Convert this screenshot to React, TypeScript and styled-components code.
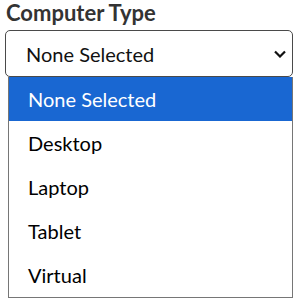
import * as React from "react";
import styled, { createGlobalStyle } from "styled-components";

const GlobalStyle = createGlobalStyle`
  body {
    margin: 0;
    background: #ffffff;
    font-family: Lato, "Noto Sans", sans-serif;
  }
`;

const Page = styled.div`
  padding: 0 8px 0 5px;
  width: 301px;
  box-sizing: border-box;
`;

const Label = styled.div`
  font-size: 22px;
  font-weight: 700;
  color: #333333;
  line-height: 25px;
  padding-left: 1px;
  margin-bottom: 5px;
`;

const SelectBox = styled.div`
  display: flex;
  align-items: center;
  justify-content: space-between;
  height: 47px;
  box-sizing: border-box;
  border: 1px solid #4a4a4a;
  border-radius: 5px;
  padding: 0 6px 0 20px;
  font-size: 20px;
  color: #111111;
`;

const List = styled.div`
  margin-left: 3px;
  border: 1px solid #767676;
  border-top: none;
  background: #ffffff;
`;

const Option = styled.div<{ $selected?: boolean }>`
  height: 44px;
  display: flex;
  align-items: center;
  padding-left: 19px;
  font-size: 20px;
  color: ${props => (props.$selected ? "#ffffff" : "#000000")};
  background: ${props => (props.$selected ? "#1967d2" : "transparent")};
`;

const options = ["None Selected", "Desktop", "Laptop", "Tablet", "Virtual"];

export default function App() {
  return (
    <Page>
      <GlobalStyle />
      <Label>Computer Type</Label>
      <SelectBox>
        <span>None Selected</span>
        <svg width="12" height="8" viewBox="0 0 12 8">
          <path d="M1 1.5 L6 6.5 L11 1.5" fill="none" stroke="#111" strokeWidth="2.2" />
        </svg>
      </SelectBox>
      <List>
        {options.map((o, i) => (
          <Option key={o} $selected={i === 0}>
            {o}
          </Option>
        ))}
      </List>
    </Page>
  );
}
